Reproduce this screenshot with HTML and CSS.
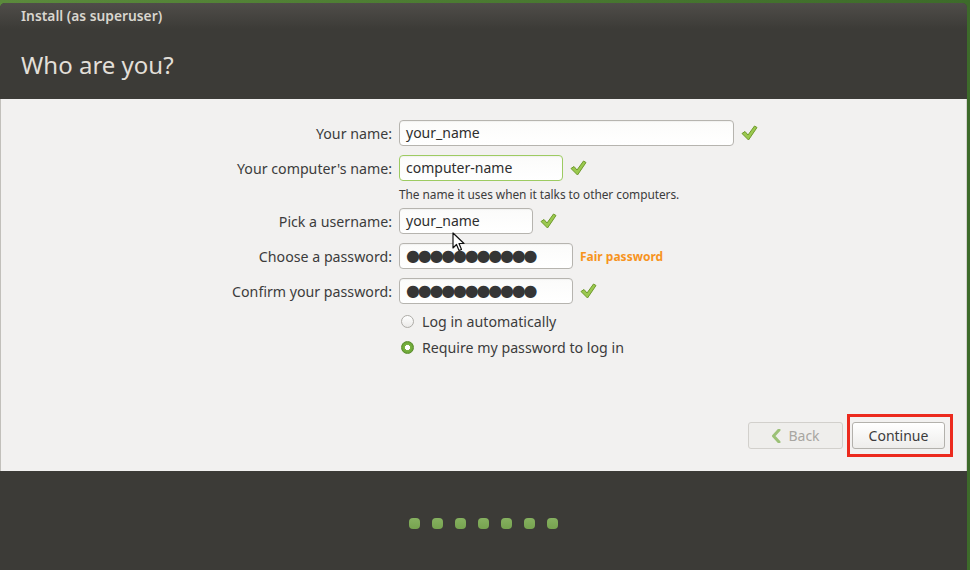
FILE: index.html
```html
<!DOCTYPE html>
<html>
<head>
<meta charset="utf-8">
<link rel="stylesheet" href="styles.css">
</head>
<body>
<div class="window">
  <header class="header">
    <div class="title">Install (as superuser)</div>
    <h1 class="heading">Who are you?</h1>
  </header>
  <main class="content">
    <div class="form">
      <div class="row">
        <label class="label">Your name:</label>
        <div class="input wide">your_name</div>
        <svg class="check" viewBox="0 0 18 18"><path d="M2 9.5 L5 7.5 L8 11 L14.5 2 L17 3.5 L8.5 16 Z" fill="#9bc94f" stroke="#6f9a2c" stroke-width="1" stroke-linejoin="round"/></svg>
      </div>
      <div class="row">
        <label class="label">Your computer's name:</label>
        <div class="input mid ok">computer-name</div>
        <svg class="check" viewBox="0 0 18 18"><path d="M2 9.5 L5 7.5 L8 11 L14.5 2 L17 3.5 L8.5 16 Z" fill="#9bc94f" stroke="#6f9a2c" stroke-width="1" stroke-linejoin="round"/></svg>
      </div>
      <div class="hint">The name it uses when it talks to other computers.</div>
      <div class="row">
        <label class="label">Pick a username:</label>
        <div class="input short">your_name</div>
        <svg class="check" viewBox="0 0 18 18"><path d="M2 9.5 L5 7.5 L8 11 L14.5 2 L17 3.5 L8.5 16 Z" fill="#9bc94f" stroke="#6f9a2c" stroke-width="1" stroke-linejoin="round"/></svg>
      </div>
      <div class="row">
        <label class="label">Choose a password:</label>
        <div class="input pw"><span class="dots">●●●●●●●●●●●</span></div>
        <span class="fair">Fair password</span>
      </div>
      <div class="row">
        <label class="label">Confirm your password:</label>
        <div class="input pw"><span class="dots">●●●●●●●●●●●</span></div>
        <svg class="check" viewBox="0 0 18 18"><path d="M2 9.5 L5 7.5 L8 11 L14.5 2 L17 3.5 L8.5 16 Z" fill="#9bc94f" stroke="#6f9a2c" stroke-width="1" stroke-linejoin="round"/></svg>
      </div>
      <div class="radio-row first">
        <span class="radio"></span>
        <span class="radio-text">Log in automatically</span>
      </div>
      <div class="radio-row">
        <span class="radio on"></span>
        <span class="radio-text">Require my password to log in</span>
      </div>
    </div>
    <div class="buttons">
      <div class="btn back"><svg class="chev" viewBox="0 0 10 14"><path d="M8 1 L2.5 7 L8 13" fill="none" stroke="#9cc177" stroke-width="3" stroke-linejoin="round" stroke-linecap="round"/></svg>Back</div>
      <div class="btn-wrap"><div class="btn cont">Continue</div><span class="highlight"></span></div>
    </div>
    <svg class="cursor" viewBox="0 0 13 20"><path d="M1 1 L1 16 L4.5 12.5 L7 18.5 L9.5 17.5 L7 11.5 L12 11.5 Z" fill="#fff" stroke="#111" stroke-width="1.2" stroke-linejoin="round"/></svg>
  </main>
  <footer class="footer">
    <span class="dot"></span><span class="dot"></span><span class="dot"></span><span class="dot"></span><span class="dot"></span><span class="dot"></span><span class="dot"></span>
  </footer>
</div>
</body>
</html>
```
FILE: styles.css
```css
html, body {
  margin: 0;
  padding: 0;
}
body {
  width: 970px;
  height: 570px;
  overflow: hidden;
  background: linear-gradient(90deg, #5b8a3c, #4d7d33 40%, #3d6b2a);
  font-family: "Noto Sans", "DejaVu Sans", sans-serif;
}
.window {
  margin-top: 3px;
  width: 967px;
  height: 567px;
  display: flex;
  flex-direction: column;
  border-radius: 5px 5px 0 0;
  overflow: hidden;
  background: #3c3b37;
}
.header {
  height: 96px;
  background: linear-gradient(#4f4d49, #3c3b37 26px);
  color: #dfdbd2;
  padding-left: 21px;
  box-sizing: border-box;
}
.title {
  font-size: 13.8px;
  font-weight: 600;
  line-height: 16px;
  padding-top: 5px;
  color: #d9d6cf;
}
.heading {
  margin: 0;
  margin-top: 25px;
  font-weight: 400;
  font-size: 24px;
  line-height: 32px;
  color: #e2dfd8;
}
.content {
  position: relative;
  height: 372px;
  background: #f2f1f0;
  border-left: 1px solid #c2c0bb;
  border-right: 1px solid #d4d2ce;
  display: flex;
  flex-direction: column;
  justify-content: space-between;
  box-sizing: border-box;
}
.form {
  padding-top: 21px;
  display: flex;
  flex-direction: column;
}
.row {
  display: flex;
  align-items: center;
  height: 26px;
  margin-bottom: 9px;
}
.label {
  width: 398px;
  text-align: right;
  font-size: 14.2px;
  color: #3c3c3c;
  padding-right: 7px;
  box-sizing: border-box;
  flex: none;
}
.input {
  height: 26px;
  box-sizing: border-box;
  border: 1px solid #b6b4af;
  border-radius: 4px;
  background: linear-gradient(#fbfbfa, #ffffff);
  font-size: 14px;
  line-height: 24px;
  padding-left: 6px;
  color: #2e2e2e;
  box-shadow: inset 0 1px 1px rgba(0,0,0,0.04);
}
.input.ok {
  border-color: #9dcb62;
}
.wide { width: 335px; }
.mid { width: 164px; }
.short { width: 134px; }
.pw { width: 174px; padding-left: 6px; }
.dots {
  font-size: 16px;
  letter-spacing: -2.2px;
  color: #353535;
  font-family: "DejaVu Sans", sans-serif;
}
.check {
  width: 18px;
  height: 18px;
  margin-left: 6px;
  flex: none;
}
.fair {
  margin-left: 7px;
  font-size: 12px;
  font-weight: 700;
  color: #f7941e;
}
.hint {
  margin-left: 398px;
  margin-top: -3px;
  margin-bottom: 7px;
  font-size: 11.9px;
  letter-spacing: -0.05px;
  line-height: 14px;
  color: #3c3c3c;
}
.radio-row {
  display: flex;
  align-items: center;
  height: 20px;
  margin-left: 400px;
  margin-bottom: 6px;
}
.radio-row.first {
  margin-top: -2px;
}
.radio {
  width: 13px;
  height: 13px;
  border-radius: 50%;
  border: 1px solid #aeaca7;
  background: linear-gradient(#ffffff, #ebeae8);
  box-sizing: border-box;
  flex: none;
}
.radio.on {
  border-color: #5a8d2c;
  background: radial-gradient(circle, #ffffff 0 2.3px, #7bb342 2.8px, #5d9a2c);
}
.radio-text {
  margin-left: 8px;
  font-size: 14.2px;
  color: #3c3c3c;
}
.buttons {
  display: flex;
  justify-content: flex-end;
  align-items: center;
  gap: 9px;
  padding-right: 21px;
  padding-bottom: 22px;
}
.btn {
  height: 27px;
  box-sizing: border-box;
  border-radius: 3px;
  font-size: 14px;
  line-height: 25px;
  text-align: center;
  display: flex;
  align-items: center;
  justify-content: center;
}
.back {
  width: 95px;
  border: 1px solid #d2d0cc;
  color: #a8a6a1;
  background: #efeeec;
}
.chev {
  width: 10px;
  height: 14px;
  margin-right: 7px;
}
.btn-wrap {
  position: relative;
}
.cont {
  width: 93px;
  border: 1px solid #b3b1ac;
  background: linear-gradient(#ffffff, #eeedeb);
  color: #3c3c3c;
}
.highlight {
  position: absolute;
  left: -5px;
  top: -8px;
  right: -8px;
  bottom: -8px;
  border: 3px solid #ec2a1e;
}
.cursor {
  position: absolute;
  left: 451px;
  top: 133px;
  width: 13px;
  height: 20px;
}
.footer {
  flex: 1;
  display: flex;
  justify-content: center;
  align-items: center;
  gap: 12px;
  padding-top: 5px;
  background: #3c3b37;
}
.dot {
  width: 11px;
  height: 11px;
  border-radius: 4px;
  background: linear-gradient(#86b160, #76a34f);
}
```
